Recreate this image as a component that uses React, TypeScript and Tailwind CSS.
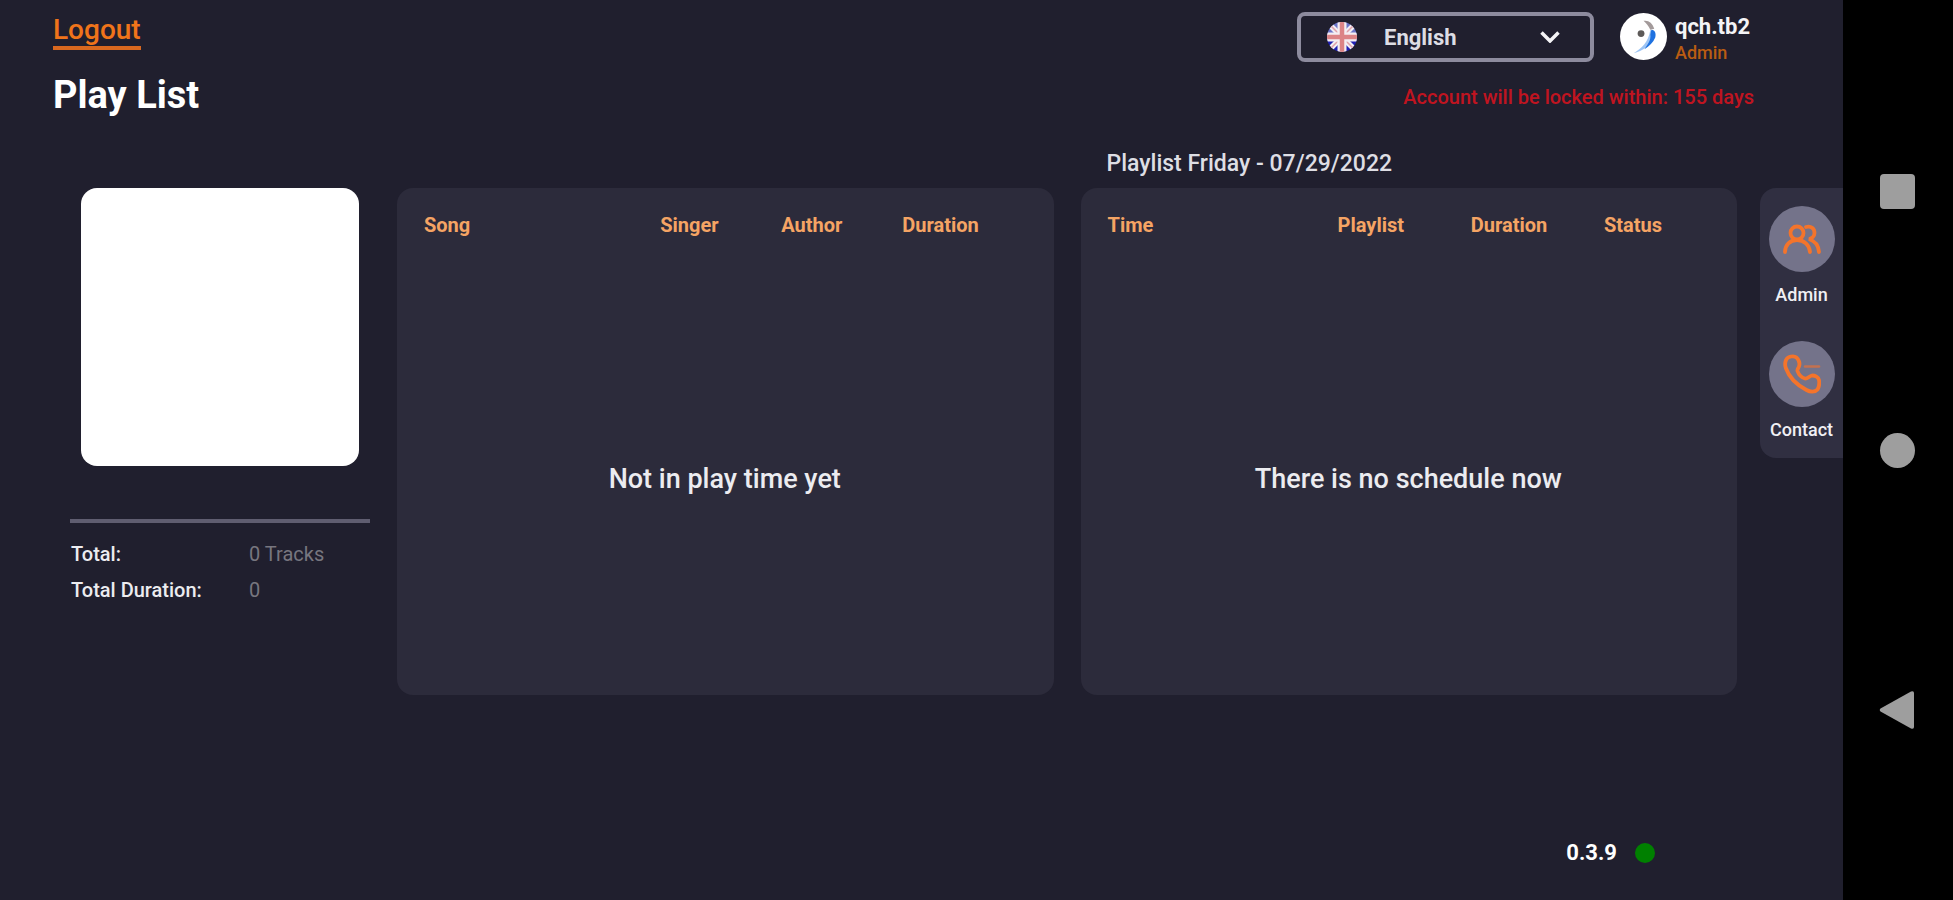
import React from "react";

type Column = { label: string; width: string };

const songColumns: Column[] = [
  { label: "Song", width: "w-[39%]" },
  { label: "Singer", width: "w-[20%]" },
  { label: "Author", width: "w-[20%]" },
  { label: "Duration", width: "w-[21%]" },
];

const scheduleColumns: Column[] = [
  { label: "Time", width: "w-[38%]" },
  { label: "Playlist", width: "w-[22%]" },
  { label: "Duration", width: "w-[22%]" },
  { label: "Status", width: "w-[18%]" },
];

function EmptyTable({ columns, message, label }: { columns: Column[]; message: string; label: string }) {
  return (
    <div className="flex flex-1 rounded-2xl bg-[#2c2b3b] pr-6 pl-[27px]">
      <table aria-label={label} className="w-full table-fixed">
        <thead>
          <tr className="h-[74px] text-left text-xl text-[#f5a464]">
            {columns.map((c) => (
              <th key={c.label} scope="col" className={c.width + " p-0 font-bold"}>
                {c.label}
              </th>
            ))}
          </tr>
        </thead>
        <tbody>
          <tr>
            <td colSpan={4} className="p-0 pt-0.5 pr-1 text-center align-middle text-[27px] font-medium text-[#ececf0]">
              {message}
            </td>
          </tr>
        </tbody>
      </table>
    </div>
  );
}

function FlagIcon() {
  return (
    <svg viewBox="0 0 30 30" className="size-[30px] shrink-0" aria-hidden="true">
      <defs>
        <clipPath id="flag-disc">
          <circle cx="15" cy="15" r="15" />
        </clipPath>
      </defs>
      <g clipPath="url(#flag-disc)">
        <rect width="30" height="15" fill="#6a74c8" />
        <rect y="15" width="30" height="15" fill="#1f1fb4" />
        <path d="M0 0L30 30M30 0L0 30" stroke="#f1eef4" strokeWidth="5.5" />
        <path d="M0 0L30 30M30 0L0 30" stroke="#e0a0a8" strokeWidth="1.500" />
        <path d="M15 0V30M0 15H30" stroke="#f4eef2" strokeWidth="9" />
        <path d="M15 0V30M0 15H30" stroke="#dc8486" strokeWidth="4.500" />
      </g>
    </svg>
  );
}

function AvatarLogo() {
  return (
    <svg viewBox="0 0 48 48" className="size-[47px] shrink-0" role="img" aria-label="qch.tb2">
      <circle cx="24" cy="24" r="24" fill="#fff" />
      <path d="M31 17C36 22 34 30 27 35C23 38 18 40 14 41C22 36 29 30 31 17Z" fill="#9cc4f4" />
      <path d="M32 17C36 17 37 21 36 25C34 30 30 34 25 37C28 32 32 28 31 22Z" fill="#1f72e0" />
      <path d="M24 8C29 7 33 10 35 16L31 17C29 13 27 11 24 8Z" fill="#a39a9a" />
      <circle cx="21.500" cy="21" r="3.5" fill="#5d5a58" />
    </svg>
  );
}

function UsersIcon() {
  return (
    <svg viewBox="0 0 38 30" className="h-[30px] w-[38px]" fill="none" stroke="#f4742b" strokeWidth="3.8" strokeLinecap="round" aria-hidden="true">
      <circle cx="14" cy="9" r="6.500" />
      <path d="M2 28C2 21 7 16 14 16C21 16 26.500 21 27 28" />
      <path d="M23 3C28 1.500 31.500 4.500 31.500 9C31.500 12 29 14.500 26 15C32 17 35.500 21 36 28" />
    </svg>
  );
}

function PhoneIcon() {
  return (
    <svg viewBox="0 0 38 40" className="h-10 w-[38px]" fill="none" stroke="#f4742b" strokeWidth="3.800" strokeLinecap="round" strokeLinejoin="round" aria-hidden="true">
      <path d="M3 6C5 2 11 1.500 13.500 3.500C16 6 17 9.500 16 12.500C15.500 14 14 15 14.500 17C15.500 20 18.500 23.500 22 24.500C24.500 25 26 22 29 21.500C32 21.500 35.500 23 36 26C36.500 29 36 33 34.500 35.500C32 38.500 27 38 23.500 36C14 31 6 23 2.800 14C1.800 11 2 8.500 3 6Z" />
      <path d="M22 12.500H36" strokeWidth="2.500" stroke="#c4714f" />
    </svg>
  );
}

function SideButton({ label, children }: { label: string; children: React.ReactNode }) {
  return (
    <button type="button" className="flex flex-col items-center gap-[11px] text-lg leading-6 font-medium text-[#f0f0f4]">
      <span className="flex size-[66px] items-center justify-center rounded-full bg-[#74738a]">{children}</span>
      {label}
    </button>
  );
}

function Header() {
  return (
    <header className="flex h-[140px] justify-between pr-[89px] pl-[53px]">
      <div className="flex flex-col items-start pt-3">
        <a href="#logout" className="border-b-4 border-[#d9681f] pt-0.5 text-[28px] leading-8 font-medium text-[#f0741a]">
          Logout
        </a>
        <h1 className="mt-6 text-[38px] leading-[42px] font-bold text-white">Play List</h1>
      </div>
      <div className="flex flex-col items-end pt-3">
        <div className="flex items-start gap-[26px]">
          <div className="flex h-[50px] w-[297px] items-center rounded-lg border-4 border-[#8d8b9e] pr-[30px] pl-[26px]">
            <FlagIcon />
            <select
              aria-label="Language"
              className="ml-[27px] min-w-0 flex-1 appearance-none bg-transparent text-[22px] font-bold text-[#dddde4] outline-none"
            >
              <option>English</option>
            </select>
            <svg viewBox="0 0 20 12" className="pointer-events-none h-3 w-5 shrink-0" fill="none" stroke="#f4f4f6" strokeWidth="3.500" aria-hidden="true">
              <path d="M1.500 1.500L10 10L18.500 1.500" />
            </svg>
          </div>
          <div className="flex w-[134px] gap-2 pt-px">
            <AvatarLogo />
            <div className="flex flex-col">
              <span className="text-[22px] leading-7 font-bold text-[#f4f4f6]">qch.tb2</span>
              <span className="text-lg leading-6 font-medium text-[#b95c12]">Admin</span>
            </div>
          </div>
        </div>
        <p className="mt-4 text-xl leading-8 font-medium text-[#c01420]">
          Account will be locked within: 155 days
        </p>
      </div>
    </header>
  );
}

function SystemBar() {
  return (
    <nav aria-label="System" className="flex w-[110px] shrink-0 flex-col items-center justify-between bg-black pt-[174px] pb-[171px] pr-0.5">
      <button type="button" aria-label="Recent apps" className="size-[35px] rounded-sm bg-[#9e9e9e]" />
      <button type="button" aria-label="Home" className="size-[35px] rounded-full bg-[#9e9e9e]" />
      <button type="button" aria-label="Back">
        <svg viewBox="0 0 36 38" className="h-[38px] w-9" fill="#9e9e9e" aria-hidden="true">
          <path d="M1.500 17.500L32 .5Q35 -.5 35 2V36Q35 38.500 32 37.500L1.500 20.500Q0 19 1.500 17.500Z" />
        </svg>
      </button>
    </nav>
  );
}

export default function App() {
  return (
    <div className="flex min-h-screen bg-[#201f2e] font-['Roboto',sans-serif]">
      <div className="flex min-w-0 flex-1 flex-col">
        <Header />
        <main className="flex flex-1 pl-[70px]">
          <aside className="mt-12 w-[300px] shrink-0">
            <div className="mx-[11px] aspect-square rounded-2xl bg-white" />
            <hr className="mt-[53px] border-t-4 border-[#5f5d70]" />
            <dl className="mt-[13px] grid grid-cols-[178px_1fr] pl-px text-xl leading-9">
              <dt className="font-medium text-[#ececf0]">Total:</dt>
              <dd className="text-[#77767f]">0 Tracks</dd>
              <dt className="font-medium text-[#ececf0]">Total Duration:</dt>
              <dd className="text-[#77767f]">0</dd>
            </dl>
          </aside>
          <section className="ml-[27px] flex min-w-0 flex-1 flex-col pt-12">
            <EmptyTable columns={songColumns} message="Not in play time yet" label="Songs" />
          </section>
          <section className="ml-[27px] flex min-w-0 flex-1 flex-col">
            <h2 className="pl-[26px] text-[23px] leading-12 font-medium text-[#dedee4]">Playlist Friday - 07/29/2022</h2>
            <EmptyTable columns={scheduleColumns} message="There is no schedule now" label="Schedule" />
          </section>
          <div className="mt-12 ml-[23px] flex w-[83px] flex-col items-center gap-[34px] self-start rounded-l-2xl bg-[#302f41] pt-[18px] pb-4">
            <SideButton label="Admin">
              <UsersIcon />
            </SideButton>
            <SideButton label="Contact">
              <PhoneIcon />
            </SideButton>
          </div>
        </main>
        <footer className="flex items-center justify-end gap-[18px] pt-[142px] pr-[188px] pb-[31px]">
          <span className="text-[22px] leading-8 font-bold text-white">0.3.9</span>
          <span className="size-5 rounded-full bg-[#008000]" />
        </footer>
      </div>
      <SystemBar />
    </div>
  );
}
